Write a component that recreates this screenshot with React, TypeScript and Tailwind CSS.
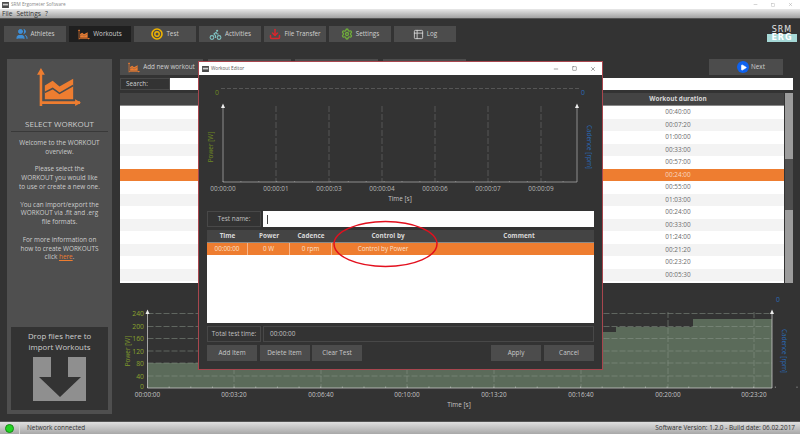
import React from "react";
import { Users, Bike, Download, Settings, Table2, Minus, Square, X, Play } from "lucide-react";

const WorkoutIcon = ({ className = "" }: { className?: string }) => (
  <svg viewBox="0 0 46 42" className={className} fill="none" stroke="#ee7d30">
    <path d="M4 40V5M4 36.5H44" strokeWidth="2.6" />
    <path d="M0 8L4 1L8 8ZM39 33L45 36.5L39 40Z" fill="#ee7d30" stroke="none" />
    <path d="M8 33V19L16 14L23 20L37 12V33Z" fill="#ee7d30" stroke="none" />
    <path d="M8 26L16 22L23 27L37 19" stroke="#4d4d4d" strokeWidth="1.6" />
  </svg>
);

const TargetIcon = () => (
  <svg viewBox="0 0 12 12" className="w-[12px] h-[12px]" fill="none">
    <circle cx="6" cy="6" r="5" stroke="#f0b400" strokeWidth="1.6" />
    <circle cx="6" cy="6" r="2.2" stroke="#f0b400" strokeWidth="1.4" />
  </svg>
);

const tabs: { label: string; icon: React.ReactNode; active?: boolean }[] = [
  { label: "Athletes", icon: <Users className="w-[12px] h-[12px] text-[#3f8fd6] fill-[#3f8fd6]" /> },
  { label: "Workouts", icon: <WorkoutIcon className="w-[12px] h-[11px]" />, active: true },
  { label: "Test", icon: <TargetIcon /> },
  { label: "Activities", icon: <Bike className="w-[13px] h-[13px] text-[#7fc4c4]" /> },
  { label: "File Transfer", icon: <Download className="w-[12px] h-[12px] text-[#d8262c]" strokeWidth={3} /> },
  { label: "Settings", icon: <Settings className="w-[12px] h-[12px] text-[#6fae3a]" strokeWidth={2.6} /> },
  { label: "Log", icon: <Table2 className="w-[11px] h-[11px] text-[#d0d0d0]" /> },
];

const durations = ["00:40:00", "00:07:20", "01:00:00", "00:33:00", "00:57:00", "00:24:00", "00:55:00", "01:03:00", "00:24:00", "00:33:00", "01:24:00", "00:21:20", "00:23:20", "00:05:30"];

const AppGlyph = () => (
  <svg viewBox="0 0 8 7" className="w-[7px] h-[6px]">
    <rect width="8" height="7" fill="#4a4a4a" />
    <rect x="1" y="2" width="6" height="2" fill="#cfcfcf" />
  </svg>
);

const MainChart = () => {
  const xs: [number, string][] = [[147.5, "00:00:00"], [234, "00:03:20"], [321, "00:06:40"], [407, "00:10:00"], [494, "00:13:20"], [581, "00:16:40"], [668, "00:20:00"], [754, "00:23:20"]];
  const ys: [number, string][] = [[313.5, "240"], [326.5, "200"], [338.5, "160"], [351, "120"], [363, "80"], [376, "40"], [388, "0"]];
  const minor = Array.from({ length: 32 }, (_, i) => 147.5 + i * 21.65);
  return (
    <svg viewBox="120 295 680 120" className="w-[680px] h-[120px] block font-['Open_Sans',sans-serif]">
      <path d="M147.5 388V363H198V332H616V327H693V319H772V388Z" fill="#5b6b5a" />
      {ys.slice(0, -1).map(([y]) => <line key={y} x1="147.5" x2="772" y1={y} y2={y} stroke="#8f9a8f" strokeWidth="0.5" strokeDasharray="6 2" />)}
      {xs.slice(1).map(([x]) => <line key={x} x1={x} x2={x} y1="312" y2="388" stroke="#8f9a8f" strokeWidth="0.5" strokeDasharray="6 2" />)}
      <path d="M147.5 312V388H772V312" stroke="#d8d8d8" strokeWidth="0.7" fill="none" />
      {minor.map((x) => <line key={x} x1={x} x2={x} y1="386.5" y2="388" stroke="#d8d8d8" strokeWidth="0.5" />)}
      <path d="M145.5 314L147.5 309.5L149.5 314ZM770 314L772 309.5L774 314Z" fill="#eee" />
      {ys.map(([y, l]) => <text key={l} x="144" y={y + (l === "0" ? 0.5 : 2.5)} fontSize="6.8" textAnchor="end" fill="#8aa32e">{l}</text>)}
      {xs.map(([x, l]) => <text key={l} x={x} y="396.5" fontSize="6.4" textAnchor="middle" fill="#c4c4c4">{l}</text>)}
      <text x="459" y="406.5" fontSize="6.4" textAnchor="middle" fill="#c4c4c4">Time [s]</text>
      <text transform="translate(130 351) rotate(-90)" fontSize="6.4" textAnchor="middle" fill="#7f982c">Power [W]</text>
      <text transform="translate(782 351) rotate(90)" fontSize="6.4" textAnchor="middle" fill="#2a6ab8">Cadence [rpm]</text>
      <text x="778" y="302" fontSize="6.8" textAnchor="middle" fill="#2a6ab8">0</text>
    </svg>
  );
};

const EditorChart = () => {
  const xs: [number, string][] = [[223, "00:00:00"], [276, "00:00:01"], [329, "00:00:03"], [382, "00:00:04"], [435, "00:00:06"], [488, "00:00:07"], [541, "00:00:09"]];
  const minor = Array.from({ length: 20 }, (_, i) => 223 + i * 17.9);
  return (
    <svg viewBox="199 74 403 135" className="w-[403px] h-[135px] block font-['Open_Sans',sans-serif]">
      <line x1="221" x2="580" y1="87.5" y2="87.5" stroke="#7a7a7a" strokeWidth="0.5" strokeDasharray="4 2" />
      {xs.slice(1).map(([x]) => <line key={x} x1={x} x2={x} y1="105" y2="181" stroke="#7a7a7a" strokeWidth="0.5" strokeDasharray="6 2" />)}
      <path d="M223 106V181H577V106" stroke="#b4b4b4" strokeWidth="0.7" fill="none" />
      {minor.map((x) => <line key={x} x1={x} x2={x} y1="180" y2="181" stroke="#b4b4b4" strokeWidth="0.5" />)}
      <path d="M221 107L223 102.5L225 107ZM575 107L577 102.5L579 107Z" fill="#eee" />
      {xs.map(([x, l]) => <text key={l} x={x} y="189.5" fontSize="6.4" textAnchor="middle" fill="#b8b8b8">{l}</text>)}
      <text x="400" y="199.5" fontSize="6.4" textAnchor="middle" fill="#c4c4c4">Time [s]</text>
      <text x="217" y="94" fontSize="6.8" textAnchor="middle" fill="#6f8a22">0</text>
      <text x="583" y="94" fontSize="6.8" textAnchor="middle" fill="#2a6ab8">0</text>
      <text transform="translate(213 146) rotate(-90)" fontSize="6.4" textAnchor="middle" fill="#6f8a22">Power [W]</text>
      <text transform="translate(587 146) rotate(90)" fontSize="6.4" textAnchor="middle" fill="#2a6ab8">Cadence [rpm]</text>
    </svg>
  );
};

const EditorButton = ({ children }: { children: React.ReactNode }) => (
  <div className="w-[50px] h-[16px] bg-[#4c4c4c] flex items-center justify-center text-[6.4px] text-[#c8c8c8]">{children}</div>
);

const LabelBox = ({ children }: { children: React.ReactNode }) => (
  <div className="w-[54px] h-[16px] border border-[#484848] flex items-center justify-center text-[6.4px] text-[#c0c0c0]">{children}</div>
);

export default function App() {
  return (
    <div className="relative w-[800px] h-[434px] overflow-hidden flex flex-col bg-[#333333] font-['Open_Sans',sans-serif]">
      <div className="h-[9px] bg-white flex items-center pl-[2px] gap-[2px]">
        <AppGlyph />
        <span className="text-[4.7px] text-[#8a8a8a]">SRM Ergometer Software</span>
        <div className="ml-auto flex items-center gap-[13px] pr-[7px] text-[#9a9a9a]">
          <Minus className="w-[5px] h-[5px]" />
          <Square className="w-[4px] h-[4px]" />
          <X className="w-[5px] h-[5px]" />
        </div>
      </div>
      <div className="h-[10px] bg-gradient-to-b from-[#e8e8e8] to-[#a2a2a2] border-b border-[#555] flex items-center pl-[2px] pt-[1px] gap-[4px] text-[6.6px] text-[#333]">
        <span>File</span><span>Settings</span><span>?</span>
      </div>
      <div className="h-[16px] mt-[7px] px-[4px] flex gap-[3px]">
        {tabs.map((t) => (
          <div key={t.label} className={`w-[62px] flex items-center justify-center gap-[3px] text-[6.3px] ${t.active ? "bg-[#1f1f1f] text-[#d0d0d0]" : "bg-[#4c4c4c] text-[#d0d0d0]"}`}>
            {t.icon}<span>{t.label}</span>
          </div>
        ))}
        <div className="ml-auto mr-[-1px] w-[30px] flex flex-col items-center leading-none font-['DejaVu_Sans',sans-serif]">
          <span className="text-[8px] tracking-[1px] text-[#e4e4e4]">SRM</span>
          <span className="w-full text-center text-[8px] tracking-[1px] font-bold bg-[#a5d8d6] text-white">ERG</span>
        </div>
      </div>
      <div className="flex-1 flex pt-[17px] pl-[7px]">
        <div className="w-[105px] h-[355px] bg-[#4f4f4f] flex flex-col items-center px-[4px] pb-[4px] text-[#cdcdcd]">
          <WorkoutIcon className="w-[45px] h-[41px] mt-[8px] shrink-0" />
          <div className="mt-[10px] text-[8px] leading-[11px]">SELECT WORKOUT</div>
          <div className="w-full h-px bg-[#393939] mt-[2px]" />
          <div className="mt-[7px] text-[6.4px] leading-[8.8px] text-center flex flex-col gap-[8.8px]">
            <p>Welcome to the WORKOUT<br />overview.</p>
            <p>Please select the<br />WORKOUT you would like<br />to use or create a new one.</p>
            <p>You can import/export the<br />WORKOUT via .fit and .erg<br />file formats.</p>
            <p>For more information on<br />how to create WORKOUTS<br />click <span className="text-[#ee7d30] underline">here</span>.</p>
          </div>
          <div className="mt-auto w-full h-[83px] bg-[#333333] flex flex-col items-center pt-[4px]">
            <div className="text-[7.8px] leading-[10.5px] text-center text-[#cfcfcf]">Drop files here to<br />import Workouts</div>
            <svg viewBox="0 0 53 44" className="w-[53px] h-[44px] mt-[5px]">
              <rect width="53" height="44" fill="#8f8f8f" />
              <path d="M18 0H35V20H48L27 40L6 20H18Z" fill="#333333" />
            </svg>
          </div>
        </div>
        <div className="ml-[8px] w-[680px] flex flex-col">
          <div className="h-[16px] flex gap-[4.5px] mr-[7px]">
            <div className="w-[83px] bg-[#4c4c4c] flex items-center justify-center gap-[3px] text-[6.3px] text-[#d0d0d0]">
              <WorkoutIcon className="w-[12px] h-[11px]" /><span>Add new workout</span>
            </div>
            <div className="w-[83px] bg-[#4c4c4c]" />
            <div className="w-[83px] bg-[#4c4c4c]" />
            <div className="w-[83px] bg-[#4c4c4c]" />
            <div className="ml-auto mr-[10px] w-[74px] bg-[#4c4c4c] flex items-center justify-center gap-[2px] pl-[10px] text-[6.3px] text-[#d0d0d0]">
              <span className="w-[12px] h-[12px] rounded-full bg-[#0f62ee] flex items-center justify-center"><Play className="w-[7px] h-[7px] text-white fill-white" /></span>
              <span>Next</span>
            </div>
          </div>
          <div className="h-[12px] mt-[3px] mr-[7px] flex">
            <div className="w-[50px] border border-[#484848] flex items-center pl-[5px] text-[6.4px] text-[#d0d0d0]">Search:</div>
            <div className="flex-1 bg-white" />
          </div>
          <div className="h-[190px] mt-[3px] mr-[7px] flex">
            <div className="flex-1 flex flex-col bg-white">
              <div className="h-[13px] shrink-0 bg-[#444444] border-b border-[#8a8a8a] flex justify-end">
                <div className="w-[212px] flex items-center justify-center text-[6.4px] font-bold text-[#d8d8d8]">Workout duration</div>
              </div>
              {durations.map((d, i) => (
                <div key={i} className={`h-[12.5px] flex justify-end ${i === 5 ? "bg-[#ee7d30] text-[#f8d8c0]" : i % 2 ? "bg-[#f3f3f3] text-[#6b6b6b]" : "bg-white text-[#6b6b6b]"}`}>
                  <div className="w-[212px] flex items-center justify-center text-[6.4px]">{d}</div>
                </div>
              ))}
            </div>
            <div className="w-[8px] ml-px bg-[#9c9c9c] flex flex-col">
              <div className="h-[66px]" />
              <div className="h-[51px] bg-[#4f4f4f]" />
            </div>
          </div>
          <div className="mt-[12px]"><MainChart /></div>
        </div>
      </div>
      <div className="h-[13px] bg-gradient-to-b from-[#e0e0e0] to-[#a8a8a8] border-t border-[#555] flex items-center text-[6.4px] text-[#333]">
        <div className="w-[20px] h-full flex items-center justify-center border-r border-[#d8d8d8]">
          <span className="w-[9px] h-[9px] rounded-full bg-[#22d422] border border-[#168a16]" />
        </div>
        <span className="ml-[7px]">Network connected</span>
        <span className="ml-auto mr-[5px]">Software Version: 1.2.0 - Build date: 06.02.2017</span>
      </div>

      <div className="absolute left-[198px] top-[61px] w-[405px] h-[309px] border border-[#a8464e] bg-[#333333] flex flex-col">
        <div className="h-[13px] bg-white flex items-center pl-[3px] gap-[2px] text-[4.7px] text-[#555]">
          <AppGlyph /><span>Workout Editor</span>
          <div className="ml-auto flex items-center gap-[13px] pr-[6px] text-[#444]">
            <Minus className="w-[6px] h-[6px]" />
            <Square className="w-[5px] h-[5px]" />
            <X className="w-[6px] h-[6px]" />
          </div>
        </div>
        <EditorChart />
        <div className="px-[8px] flex flex-col flex-1 pt-px">
          <div className="flex gap-[2px]">
            <LabelBox>Test name:</LabelBox>
            <div className="flex-1 h-[16px] bg-white flex items-center pl-[4px]"><span className="w-px h-[9px] bg-[#444]" /></div>
          </div>
          <div className="mt-[3px] h-[93px] bg-white flex flex-col">
            <div className="h-[13px] bg-[#444444] border-b border-[#8a8a8a] flex text-[6.4px] font-bold text-[#d8d8d8] items-center text-center">
              <div className="w-[41px]">Time</div>
              <div className="w-[42px]">Power</div>
              <div className="w-[42px]">Cadence</div>
              <div className="w-[112px]">Control by</div>
              <div className="flex-1">Comment</div>
            </div>
            <div className="h-[12px] bg-[#ee7d30] flex text-[6.3px] text-[#fbe0cc] items-center text-center">
              <div className="w-[41px] h-full flex items-center justify-center border-r border-[#f5b48a]">00:00:00</div>
              <div className="w-[42px] h-full flex items-center justify-center border-r border-[#f5b48a]">0 W</div>
              <div className="w-[42px] h-full flex items-center justify-center border-r border-[#f5b48a]">0 rpm</div>
              <div className="w-[102px]">Control by Power</div>
            </div>
          </div>
          <div className="mt-[3px] flex gap-[2px]">
            <LabelBox>Total test time:</LabelBox>
            <div className="flex-1 h-[16px] border border-[#484848] flex items-center pl-[6px] text-[6.4px] text-[#c0c0c0]">00:00:00</div>
          </div>
          <div className="mt-[3px] flex gap-[2.5px]">
            <EditorButton>Add Item</EditorButton>
            <EditorButton>Delete Item</EditorButton>
            <EditorButton>Clear Test</EditorButton>
            <div className="ml-auto flex gap-[3px]">
              <EditorButton>Apply</EditorButton>
              <EditorButton>Cancel</EditorButton>
            </div>
          </div>
        </div>
      </div>

      <svg viewBox="0 0 110 50" className="absolute left-[331px] top-[220px] w-[110px] h-[50px]">
        <ellipse cx="54.5" cy="24" rx="51.5" ry="22.5" fill="none" stroke="#e3101e" strokeWidth="1.5" />
      </svg>
    </div>
  );
}
